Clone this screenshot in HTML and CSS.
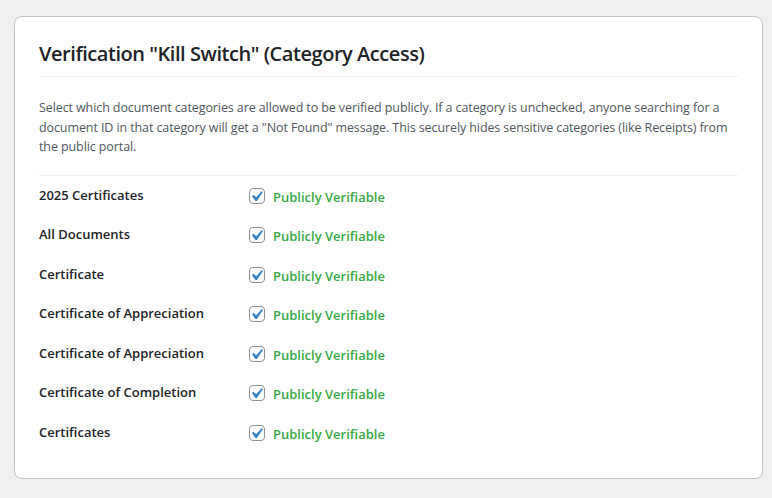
FILE: index.html
```html
<!DOCTYPE html>
<html lang="en">
<head>
<meta charset="utf-8">
<title>Verification Kill Switch</title>
<link rel="stylesheet" href="styles.css">
</head>
<body>
<div class="card">
  <h2 class="title">Verification "Kill Switch" (Category Access)</h2>
  <p class="desc">Select which document categories are allowed to be verified publicly. If a category is unchecked, anyone searching for a document ID in that category will get a "Not Found" message. This securely hides sensitive categories (like Receipts) from the public portal.</p>
  <div class="rows">
    <div class="row"><div class="label">2025 Certificates</div><label class="field"><svg class="cb" viewBox="0 0 16 16" width="16" height="16"><rect x="0.5" y="0.5" width="15" height="15" rx="3.5" fill="#fff" stroke="#8c8f94"/><path transform="translate(-3,-2) scale(1.05)" fill="#3582c4" d="M14.83 4.89l1.34.94-5.81 8.38H9.02L5.78 9.67l1.34-1.25 2.57 2.4z"/></svg><span class="ok">Publicly Verifiable</span></label></div>
    <div class="row"><div class="label">All Documents</div><label class="field"><svg class="cb" viewBox="0 0 16 16" width="16" height="16"><rect x="0.5" y="0.5" width="15" height="15" rx="3.5" fill="#fff" stroke="#8c8f94"/><path transform="translate(-3,-2) scale(1.05)" fill="#3582c4" d="M14.83 4.89l1.34.94-5.81 8.38H9.02L5.78 9.67l1.34-1.25 2.57 2.4z"/></svg><span class="ok">Publicly Verifiable</span></label></div>
    <div class="row"><div class="label">Certificate</div><label class="field"><svg class="cb" viewBox="0 0 16 16" width="16" height="16"><rect x="0.5" y="0.5" width="15" height="15" rx="3.5" fill="#fff" stroke="#8c8f94"/><path transform="translate(-3,-2) scale(1.05)" fill="#3582c4" d="M14.83 4.89l1.34.94-5.81 8.38H9.02L5.78 9.67l1.34-1.25 2.57 2.4z"/></svg><span class="ok">Publicly Verifiable</span></label></div>
    <div class="row"><div class="label">Certificate of Appreciation</div><label class="field"><svg class="cb" viewBox="0 0 16 16" width="16" height="16"><rect x="0.5" y="0.5" width="15" height="15" rx="3.5" fill="#fff" stroke="#8c8f94"/><path transform="translate(-3,-2) scale(1.05)" fill="#3582c4" d="M14.83 4.89l1.34.94-5.81 8.38H9.02L5.78 9.67l1.34-1.25 2.57 2.4z"/></svg><span class="ok">Publicly Verifiable</span></label></div>
    <div class="row"><div class="label">Certificate of Appreciation</div><label class="field"><svg class="cb" viewBox="0 0 16 16" width="16" height="16"><rect x="0.5" y="0.5" width="15" height="15" rx="3.5" fill="#fff" stroke="#8c8f94"/><path transform="translate(-3,-2) scale(1.05)" fill="#3582c4" d="M14.83 4.89l1.34.94-5.81 8.38H9.02L5.78 9.67l1.34-1.25 2.57 2.4z"/></svg><span class="ok">Publicly Verifiable</span></label></div>
    <div class="row"><div class="label">Certificate of Completion</div><label class="field"><svg class="cb" viewBox="0 0 16 16" width="16" height="16"><rect x="0.5" y="0.5" width="15" height="15" rx="3.5" fill="#fff" stroke="#8c8f94"/><path transform="translate(-3,-2) scale(1.05)" fill="#3582c4" d="M14.83 4.89l1.34.94-5.81 8.38H9.02L5.78 9.67l1.34-1.25 2.57 2.4z"/></svg><span class="ok">Publicly Verifiable</span></label></div>
    <div class="row"><div class="label">Certificates</div><label class="field"><svg class="cb" viewBox="0 0 16 16" width="16" height="16"><rect x="0.5" y="0.5" width="15" height="15" rx="3.5" fill="#fff" stroke="#8c8f94"/><path transform="translate(-3,-2) scale(1.05)" fill="#3582c4" d="M14.83 4.89l1.34.94-5.81 8.38H9.02L5.78 9.67l1.34-1.25 2.57 2.4z"/></svg><span class="ok">Publicly Verifiable</span></label></div>
  </div>
</div>
</body>
</html>
```

FILE: styles.css
```css
html, body {
  margin: 0;
  background: #f0f0f1;
}
body {
  padding: 16px 9px 0 14px;
  font-family: "Open Sans", "Noto Sans", "Liberation Sans", sans-serif;
  color: #1d2327;
}
.card {
  background: #fff;
  border: 1px solid #c3c4c7;
  border-radius: 8px;
  padding: 0 24px 26px;
  box-shadow: 0 1px 1px rgba(0,0,0,0.04);
}
.title {
  margin: 0;
  padding: 24px 0 10px;
  font-size: 20px;
  line-height: 25px;
  font-weight: 600;
  color: #1d2327;
  border-bottom: 1px solid #f0f0f1;
  letter-spacing: -0.45px;
}
.desc {
  margin: 0;
  padding: 21px 0 18px;
  font-size: 12.5px;
  line-height: 19.5px;
  letter-spacing: -0.1px;
  color: #50575e;
  border-bottom: 1px solid #f0f0f1;
}
.rows {
  display: flex;
  flex-direction: column;
}
.row {
  display: grid;
  grid-template-columns: 210px 1fr;
  height: 39.5px;
  align-items: start;
}
.label {
  padding-top: 10px;
  font-size: 13px;
  line-height: 18px;
  font-weight: 600;
  color: #1d2327;
}
.field {
  display: flex;
  align-items: center;
  gap: 8px;
  padding-top: 10px;
}
.cb {
  display: block;
  flex: none;
}
.ok {
  font-size: 13px;
  line-height: 18px;
  font-weight: 600;
  color: #36a846;
  padding-top: 2px;
}
```
